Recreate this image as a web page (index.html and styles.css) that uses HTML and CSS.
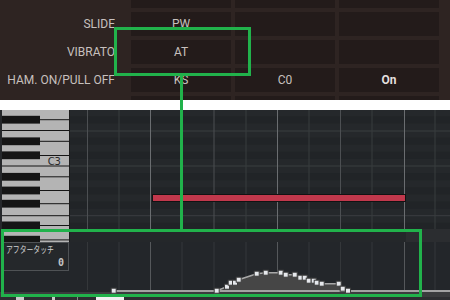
FILE: index.html
```html
<!DOCTYPE html>
<html lang="en">
<head>
  <meta charset="UTF-8">
  <title>Note Properties</title>
  <link rel="stylesheet" href="styles.css">
</head>
<body>
  <div class="screen">
    <div class="props">
      <div class="props-grid">
        <div class="label"></div><div class="cell"></div><div class="cell"></div><div class="cell"></div>
        <div class="label">SLIDE</div><div class="cell">PW</div><div class="cell"></div><div class="cell"></div>
        <div class="label">VIBRATO</div><div class="cell">AT</div><div class="cell"></div><div class="cell"></div>
        <div class="label">HAM. ON/PULL OFF</div><div class="cell">KS</div><div class="cell">C0</div><div class="cell on">On</div>
        <div class="label"></div><div class="cell"></div><div class="cell"></div><div class="cell"></div>
      </div>
    </div>

    <div class="divider"></div>

    <div class="roll">
      <svg class="keys" width="70" height="132" viewBox="0 0 70 132">
        <rect width="70" height="132" fill="#b4b4b4"/>
        <rect width="2" height="132" fill="#26282b"/>
        <rect x="69" width="1" height="132" fill="#1a1a1a"/>
        <g fill="#151515">
          <rect x="2" y="-7.9" width="38" height="7.6"/>
          <rect x="2" y="5.8" width="38" height="7.8"/>
          <rect x="2" y="27.4" width="38" height="7.8"/>
          <rect x="2" y="41.4" width="38" height="7.8"/>
          <rect x="2" y="62.9" width="38" height="7.8"/>
          <rect x="2" y="76.6" width="38" height="7.8"/>
          <rect x="2" y="89.8" width="38" height="7.8"/>
          <rect x="2" y="111.5" width="38" height="7.8"/>
          <rect x="2" y="125.8" width="38" height="7.8"/>
          <rect x="40" y="9.2" width="29" height="1"/>
          <rect x="40" y="30.8" width="29" height="1"/>
          <rect x="40" y="45" width="29" height="1"/>
          <rect x="40" y="66.3" width="29" height="1"/>
          <rect x="40" y="80" width="29" height="1"/>
          <rect x="40" y="93.2" width="29" height="1"/>
          <rect x="40" y="115" width="29" height="1"/>
          <rect x="40" y="129.4" width="29" height="1"/>
          <rect x="2" y="20" width="67" height="1"/>
          <rect x="2" y="55.5" width="67" height="1"/>
          <rect x="2" y="105.2" width="67" height="1"/>
        </g>
        <text x="61" y="55" class="key-name" text-anchor="end">C3</text>
      </svg>
      <svg class="grid" width="380" height="132" viewBox="0 0 380 132">
        <rect width="380" height="119" fill="#25282b"/>
        <g fill="#212427">
          <rect y="-7.9" width="380" height="7.1"/>
          <rect y="6.3" width="380" height="7.1"/>
          <rect y="27.6" width="380" height="7.1"/>
          <rect y="41.8" width="380" height="7.1"/>
          <rect y="63.1" width="380" height="7.1"/>
          <rect y="77.3" width="380" height="7.1"/>
          <rect y="91.5" width="380" height="7.1"/>
          <rect y="112.8" width="380" height="7.1"/>
        </g>
        <g fill="#3b3e41">
          <rect y="20.5" width="380" height="1"/>
          <rect y="55.5" width="380" height="1"/>
          <rect y="105.2" width="380" height="1"/>
        </g>
        <g fill="#393c3f">
          <rect x="48.5" width="1" height="119"/>
          <rect x="111.5" width="1" height="119"/>
          <rect x="175.5" width="1" height="119"/>
          <rect x="238.5" width="1" height="119"/>
          <rect x="301.5" width="1" height="119"/>
          <rect x="364.5" width="1" height="119"/>
        </g>
        <g fill="#4c4f52">
          <rect x="17" width="1" height="119"/>
          <rect x="143.5" width="1" height="119"/>
          <rect x="270" width="1" height="119"/>
        </g>
        <g fill="#6a6d70">
          <rect x="80" width="1" height="119"/>
          <rect x="207" width="1" height="119"/>
          <rect x="334" width="1" height="119"/>
        </g>
        <rect x="82.5" y="84.5" width="253" height="7" fill="#c1384c" stroke="#121212"/>
        <rect y="119" width="380" height="13" fill="#24272a"/>
        <rect x="336" y="119" width="44" height="13" fill="#2b2d30"/>
      </svg>
    </div>

    <div class="lane">
      <div class="lane-head">
        <div class="lane-box">
          <span class="lane-name">アフタータッチ</span>
          <span class="lane-value">0</span>
        </div>
      </div>
      <svg class="lane-graph" width="380" height="50" viewBox="0 0 380 50">
        <rect width="380" height="50" fill="#23262a"/>
        <g fill="#34373a">
          <rect x="17" width="1" height="48"/>
          <rect x="48.5" width="1" height="48"/>
          <rect x="111.5" width="1" height="48"/>
          <rect x="143.5" width="1" height="48"/>
          <rect x="175.5" width="1" height="48"/>
          <rect x="238.5" width="1" height="48"/>
          <rect x="270" width="1" height="48"/>
          <rect x="301.5" width="1" height="48"/>
          <rect x="364.5" width="1" height="48"/>
        </g>
        <g fill="#55585b">
          <rect x="80" width="1" height="48"/>
          <rect x="207" width="1" height="48"/>
          <rect x="334" width="1" height="48"/>
        </g>
        <polygon fill="#464646" points="146.7,49 157,44.7 160.7,40.7 165,40.7 168.7,37.7 186.7,31.7 195.7,30.7 210.7,30.7 215.7,32.7 224.7,32.7 230.3,35.7 234.7,35.7 238.7,38.7 243.7,38.7 246.7,40.7 251.7,41.7 268.7,41.7 272.7,46.7 278,49"/>
        <rect x="43.7" y="48" width="336.3" height="2" fill="#a3a3a3"/>
        <polyline fill="none" stroke="#a8a8a8" stroke-width="1.5" points="146.7,48.7 157,44.7 160.7,40.7 165,40.7 168.7,37.7 186.7,31.7 195.7,30.7 210.7,30.7 215.7,32.7 224.7,32.7 230.3,35.7 234.7,35.7 238.7,38.7 243.7,38.7 246.7,40.7 251.7,41.7 268.7,41.7 272.7,46.7 278,48.7"/>
        <g fill="#e6e8ec" stroke="#3e3e3e" stroke-width="1">
          <rect x="41.2" y="46.2" width="5" height="5"/>
          <rect x="144.2" y="46.2" width="5" height="5"/>
          <rect x="154.5" y="42.2" width="5" height="5"/>
          <rect x="158.2" y="38.2" width="5" height="5"/>
          <rect x="162.5" y="38.2" width="5" height="5"/>
          <rect x="166.2" y="35.2" width="5" height="5"/>
          <rect x="184.2" y="29.2" width="5" height="5"/>
          <rect x="193.2" y="28.2" width="5" height="5"/>
          <rect x="208.2" y="28.2" width="5" height="5"/>
          <rect x="213.2" y="30.2" width="5" height="5"/>
          <rect x="222.2" y="30.2" width="5" height="5"/>
          <rect x="227.8" y="33.2" width="5" height="5"/>
          <rect x="232.2" y="33.2" width="5" height="5"/>
          <rect x="236.2" y="36.2" width="5" height="5"/>
          <rect x="241.2" y="36.2" width="5" height="5"/>
          <rect x="244.2" y="38.2" width="5" height="5"/>
          <rect x="249.2" y="39.2" width="5" height="5"/>
          <rect x="266.2" y="39.2" width="5" height="5"/>
          <rect x="270.2" y="44.2" width="5" height="5"/>
          <rect x="275.5" y="46.2" width="5" height="5"/>
        </g>
      </svg>
    </div>
    <div class="lane-foot"></div>
    <div class="scroll">
      <span class="thumb t1"></span>
      <span class="thumb t2"></span>
      <span class="thumb t3"></span>
      <span class="thumb t4"></span>
    </div>

    <div class="mark mark-box"></div>
    <div class="mark mark-line"></div>
    <div class="mark mark-lane"></div>
  </div>
</body>
</html>
```

FILE: styles.css
```css
body {
  margin: 0;
  background: #2e2422;
  font-family: Roboto, "Liberation Sans", sans-serif;
}

.screen {
  position: relative;
  width: 450px;
  height: 300px;
  overflow: hidden;
}

.props {
  height: 100px;
  overflow: hidden;
  background: #2e2422;
}

.props-grid {
  display: grid;
  grid-template-columns: 127px 100px 100px 100px;
  grid-auto-rows: 24px;
  gap: 4px;
  margin-top: -16px;
}

.label {
  text-align: right;
  padding-right: 12px;
  line-height: 24px;
  font-size: 12px;
  color: #c7c0be;
  white-space: nowrap;
}

.cell {
  background: #231b1a;
  text-align: center;
  line-height: 24px;
  font-size: 12px;
  color: #c7c0be;
}

.cell.on {
  font-weight: bold;
  color: #e4dfde;
}

.divider {
  height: 10px;
  background: #fff;
}

.roll {
  display: flex;
  height: 132px;
}

.keys, .grid {
  display: block;
  overflow: hidden;
}

.lane-graph {
  display: block;
  overflow: visible;
}

.key-name {
  font-family: "DejaVu Sans", sans-serif;
  font-size: 10px;
  fill: #2a2a2a;
}

.lane {
  display: flex;
  height: 50px;
  background: #23262a;
}

.lane-head {
  width: 70px;
  flex: none;
  padding-left: 2px;
  box-sizing: border-box;
}

.lane-box {
  display: flex;
  flex-direction: column;
  width: 67px;
  height: 29px;
  box-sizing: border-box;
  border: 1px solid #4f5255;
  background: #25282b;
  padding: 1px 4px 0 3px;
  color: #d2d2d2;
}

.lane-name {
  display: inline-block;
  font-family: "Noto Sans CJK JP", sans-serif;
  font-size: 9px;
  line-height: 12px;
  white-space: nowrap;
  transform: scaleX(0.76);
  transform-origin: left center;
}

.lane-value {
  align-self: flex-end;
  font-family: "DejaVu Sans Mono", monospace;
  font-weight: bold;
  font-size: 10px;
  line-height: 13px;
  color: #c4c4c4;
}

.lane-foot {
  height: 5px;
  background: #3a3b3d;
}

.scroll {
  display: flex;
  height: 3px;
  background: #2d2e31;
}

.thumb {
  display: block;
  height: 3px;
  background: #c9c9c9;
}

.t1 { margin-left: 16px; width: 8px; }
.t2 { margin-left: 28px; width: 3px; }
.t3 { margin-left: 22px; width: 1px; background: #8a8a8a; }
.t4 { margin-left: 18px; width: 28px; background: #f0f0f0; }

.mark {
  position: absolute;
  box-sizing: border-box;
}

.mark-box {
  left: 114px;
  top: 27px;
  width: 137px;
  height: 49px;
  border: 3px solid #21b24b;
}

.mark-line {
  left: 180px;
  top: 76px;
  width: 3px;
  height: 154px;
  background: #21b24b;
}

.mark-lane {
  left: 1px;
  top: 229px;
  width: 421px;
  height: 68px;
  border: 3px solid #21b24b;
}
```
